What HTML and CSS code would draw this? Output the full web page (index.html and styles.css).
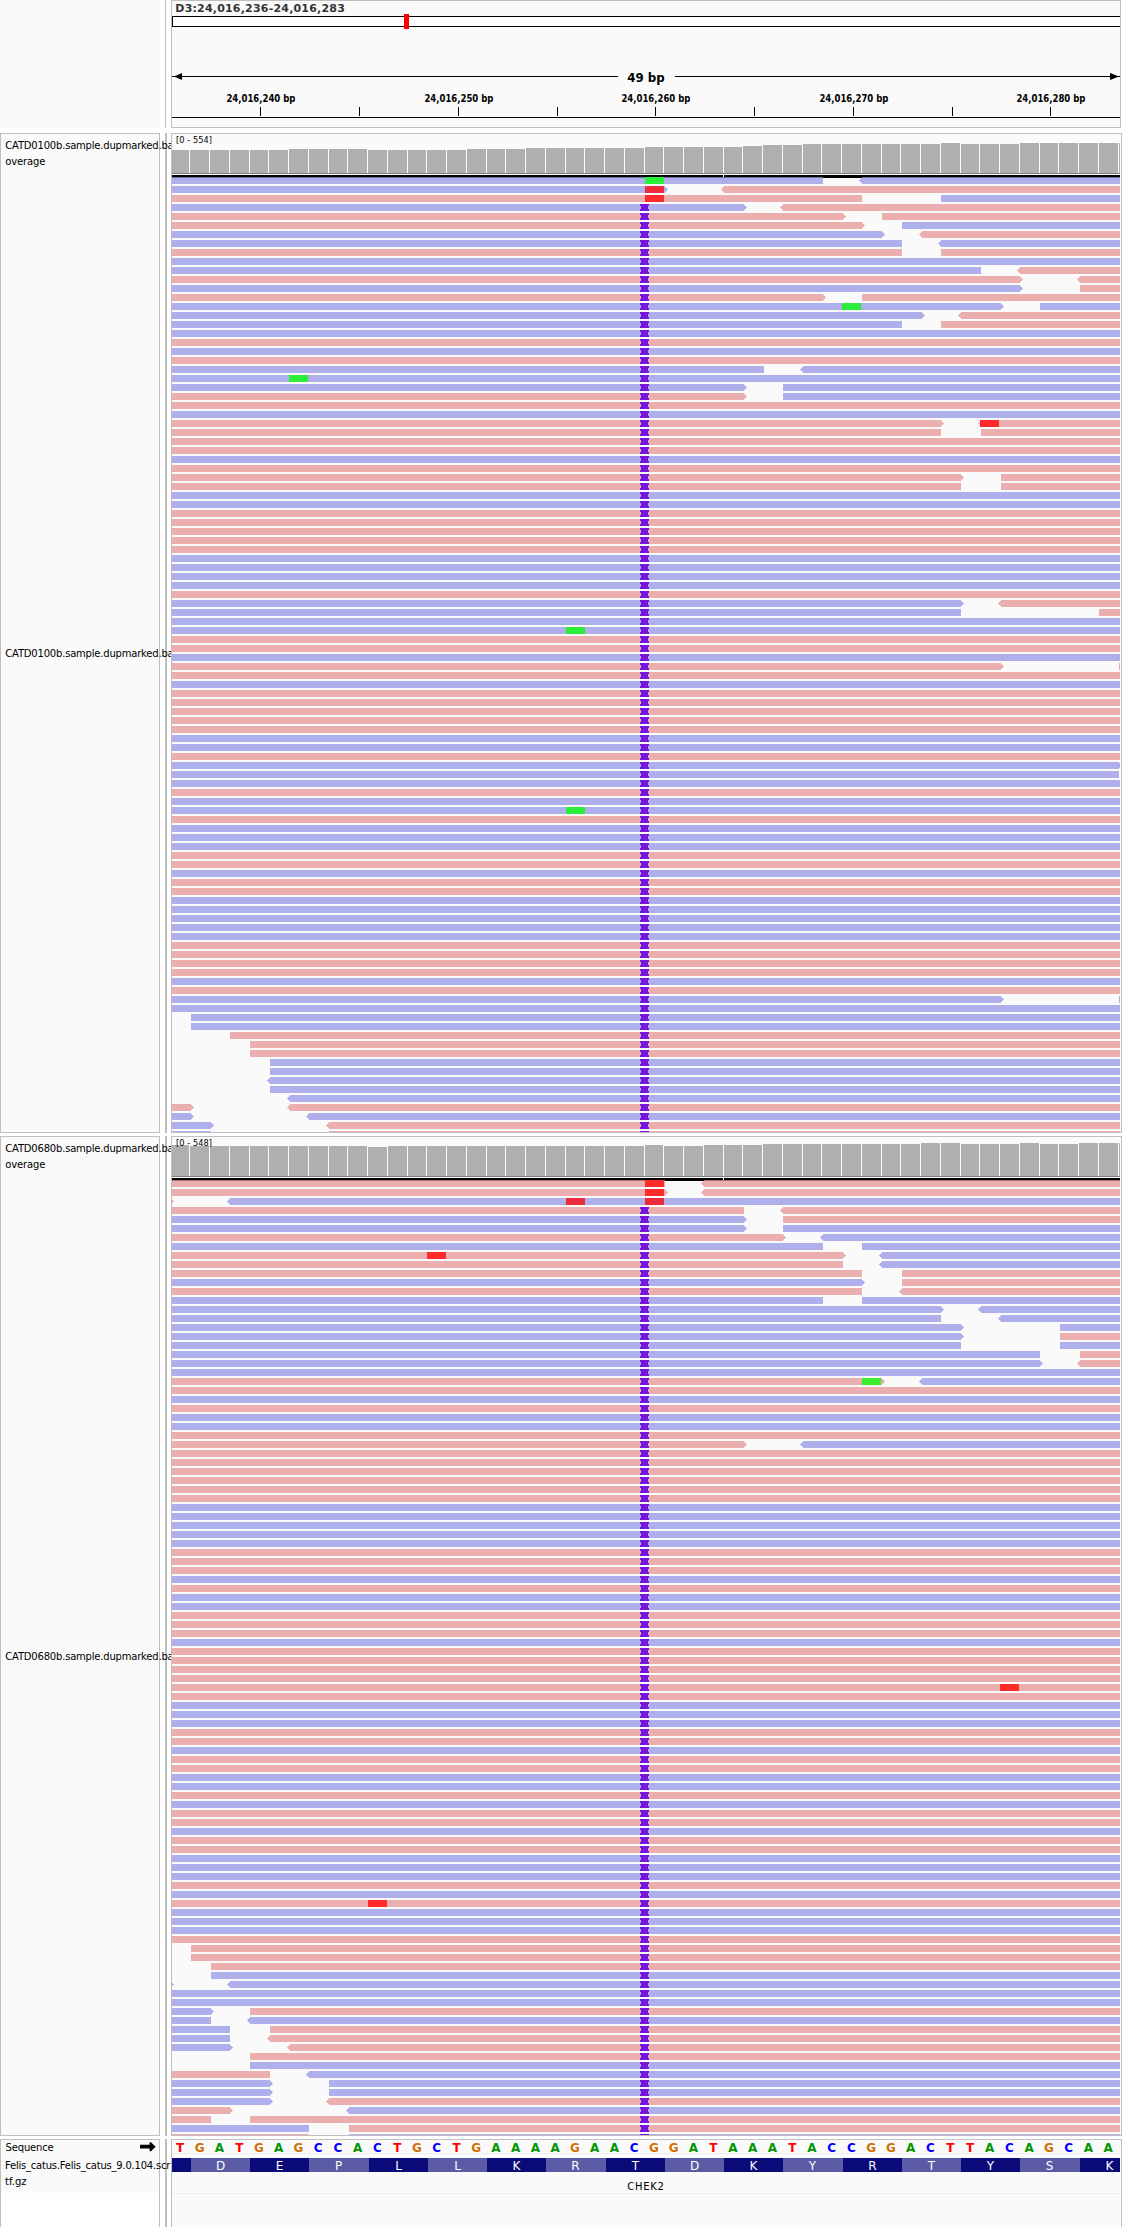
FILE: index.html
```html
<!DOCTYPE html>
<html lang="en">
<head>
<meta charset="utf-8">
<title>D3:24,016,236-24,016,283</title>
<link rel="stylesheet" href="styles.css">
</head>
<body>
<main class="viewer">
  <section class="band band-header">
    <div class="names names-empty"></div>
    <div class="splitter splitter-thin"></div>
    <div class="data data-header">
      <svg class="plot" width="948" height="126" viewBox="172 1 948 126" id="ruler">
        <text class="locus" x="175.3" y="12" textLength="169.5">D3:24,016,236-24,016,283</text>
        <rect class="ideogram" x="172.5" y="16.5" width="960" height="10"/>
        <rect class="window" x="404" y="14" width="5" height="15"/>
        <path class="line" d="M172 76.5H618M675 76.5H1120M172 117.5H1120"/>
        <path class="head" d="M174 76.5L182 73V80ZM1119 76.5L1110 73V80Z"/>
        <text class="span" x="627.3" y="82" textLength="37.5" lengthAdjust="spacingAndGlyphs">49 bp</text>
      </svg>
    </div>
  </section>

  <section class="band band-track">
    <div class="names">
      <p class="name name-coverage">CATD0100b.sample.dupmarked.ba<br><span class="tail">overage</span></p>
      <p class="name name-reads">CATD0100b.sample.dupmarked.ba</p>
    </div>
    <div class="splitter"></div>
    <div class="data">
      <svg class="plot" width="948" height="998" viewBox="172 134 948 998" id="track-0100b"></svg>
    </div>
  </section>

  <section class="band band-track">
    <div class="names">
      <p class="name name-coverage">CATD0680b.sample.dupmarked.ba<br><span class="tail">overage</span></p>
      <p class="name name-reads">CATD0680b.sample.dupmarked.ba</p>
    </div>
    <div class="splitter"></div>
    <div class="data">
      <svg class="plot" width="948" height="998" viewBox="172 134 948 998" id="track-0680b"></svg>
    </div>
  </section>

  <section class="band band-features">
    <div class="names names-features">
      <div class="feature-names">
        <div class="sequence-row">
          <span class="name sequence-name">Sequence</span>
          <svg class="strand" width="16" height="10" viewBox="0 0 16 10"><path d="M0 2.8H9.6V.2H11L15.6 4.7L11 9.2H9.6V6.6H0Z"/></svg>
        </div>
        <p class="name gtf-name">Felis_catus.Felis_catus_9.0.104.scr<br><span class="gtf-tail">tf.gz</span></p>
      </div>
    </div>
    <div class="splitter"></div>
    <div class="data">
      <svg class="plot" width="948" height="87" viewBox="172 2140 948 87" id="features">
        <path class="divider" d="M172 2153.5H1120M172 2193.5H1120"/>
        <text class="gene" x="627.2" y="2190" textLength="36.6">CHEK2</text>
      </svg>
    </div>
  </section>
</main>
<script src="tracks.js"></script>
</body>
</html>
```

FILE: styles.css
```css
body {
  margin: 0;
  background: #fff;
  font-family: "DejaVu Sans", sans-serif;
  color: #000;
}

.viewer {
  display: flex;
  flex-direction: column;
  width: 1140px;
  height: 2227px;
  overflow: hidden;
}

.band {
  display: flex;
  flex: none;
}

.band-header { height: 128px; margin-bottom: 5px; }
.band-track { height: 1000px; margin-bottom: 3px; }
.band-features { height: 88px; }

.names {
  box-sizing: border-box;
  width: 160px;
  flex: none;
  background: #fafafa;
  border: 1px solid #bfbfbf;
  z-index: 1;
}

.names-empty { border: 0; }
.names-features { background: #fff; border-bottom: 0; }
.feature-names { height: 53px; background: #fafafa; }

.splitter {
  width: 2px;
  flex: none;
  margin: 0 4px 0 5px;
  background: #bfbfbf;
}

.splitter-thin { width: 1px; margin-right: 5px; }

.data {
  box-sizing: border-box;
  width: 951px;
  flex: none;
  background: #fafafa;
  border: 1px solid #bfbfbf;
  z-index: 2;
}

.data-header { width: 950px; }
.band-features .data { border-bottom: 0; }

.plot { display: block; }

.name {
  margin: 0;
  font-size: 10px;
  line-height: 16px;
  letter-spacing: -0.2px;
  white-space: nowrap;
}

.tail { letter-spacing: -0.15px; }
.name-coverage { padding: 4px 0 0 4.3px; }
.name-reads { padding: 476px 0 0 4.3px; }

.sequence-row {
  display: flex;
  justify-content: space-between;
  height: 18px;
  padding: 0 3px 0 4.5px;
}

.sequence-name { letter-spacing: -0.15px; }
.strand { margin-top: 2px; }
.gtf-name { padding-left: 4px; letter-spacing: -0.22px; }
.gtf-tail { letter-spacing: 0; }

.locus { font-size: 11px; font-weight: bold; fill: #333; }
.ideogram { fill: #fff; stroke: #000; }
.window { fill: #f00; }
.line { stroke: #000; fill: none; }
.head { fill: #000; }
.span { font-size: 12px; font-weight: bold; }
.tick-label { font-size: 10px; font-weight: bold; }

.range { font-size: 8.2px; }
.coverage { fill: #afafaf; }
.baseline { fill: #808080; }
.rule { fill: #000; }
.notch { fill: #fff; }
.read-b { fill: #afafeb; }
.read-r { fill: #ebafaf; }
.edge-b { fill: #70709b; }
.edge-r { fill: #9b7070; }
.insertion { fill: #7615dc; }
.snp-T-r { fill: #ff2b2b; }
.snp-T-b { fill: #ed2b3b; }
.snp-A-r { fill: #3bee2b; }
.snp-A-b { fill: #2bee3b; }

.divider { stroke: #eee; }
.gene { font-size: 10px; }
.exon-dark { fill: #0a0a78; }
.exon-light { fill: #5b5ba5; }
.residue { font-size: 12px; fill: #fff; text-anchor: middle; }
.base { font-size: 12px; font-weight: bold; text-anchor: middle; }
.base-A { fill: #009600; }
.base-C { fill: #0000ff; }
.base-G { fill: #d17105; }
.base-T { fill: #ff0000; }
```

FILE: tracks.js
```js
const NS = "http://www.w3.org/2000/svg";
const RIGHT = 1120;
const LEFT = 172;
const readX = k => Math.floor(171.5 + 19.75 * k);
const binX = k => Math.floor(170 + 19.75 * k) + 1;

function add(svg, tag, cls, attrs, text) {
  const el = document.createElementNS(NS, tag);
  el.setAttribute("class", cls);
  for (const name in attrs) el.setAttribute(name, attrs[name]);
  if (text) el.textContent = text;
  svg.appendChild(el);
}

function box(svg, cls, x, y, width, height) {
  add(svg, "rect", cls, { x, y, width, height, "shape-rendering": "crispEdges" });
}

// Ruler ticks, every 5 bp, labelled every 10 bp
const ruler = document.getElementById("ruler");
[260, 359, 458, 557, 655, 754, 853, 952, 1050].forEach((x, i) => {
  box(ruler, "rule", x, 107, 1, 9);
  if (i % 2 === 0) {
    add(ruler, "text", "tick-label",
      { x: x - 33.6, y: 102, textLength: 69, lengthAdjust: "spacingAndGlyphs" },
      "24,016," + (240 + i * 5) + " bp");
  }
});

// Each row lists its reads: strand colour, first and last base, "<" or ">" for
// an arrow end. Mismatches (base letter and position) follow their read.
// A single-letter read crosses the whole window.
const rows0100 = `b-33 A24 b<35-|b-25> T24 r<28-|r-35 T24 b39-|b-29> r<31-|r-34> r36-|r-35> b37-|b-36> r<38-|b-37 b<39-|r-37 r39-|b
b-41 r<43-|r-43> r<46-|b-43> r46-|r-33> r35-|b-42> A34 b44-|b-38> r<40-|b-37 r39-|b|r|b
r|b-30 b<32-|b A6|b-29> b31-|r-29> b31-|r|b|r-39> r<41- T41|r-39 r41-|r
r|b|r|r-40> r42-|r-40 r42-|b|b|r|r|r
r|r|b|b|b|b|r|b-40> r<42-|b-40 r47-|b
b A20|r|r|b|r-42> r48-|r|b|r|r|r
r|r|b|b|r|b-48>|b-48|b|r|b
b A20|r|b|b|b|r|r|b|r|r
b|b|b|b|b|r|r|r|r|b
r|b-42> b48-|b|b1-|b1-|r3-|r4-|r4-|b5-|b5-
b<5-|b5-|b<6-|r-1> r<6-|b-1> b<7-|b-2> r<8-|b-2 r8-`;

const rows0680 = `r-25 T24 r<27-|r-25> T24 r<27-|r-0> b<3- T20 T24|r-29 r<31-|b-29> r31-|b-29> b31-|r-31> b<33-|b-33 b35-|r-34> T13 b<36-|r-34 b<36-
r-35 r37-|b-35> r37-|r-35 r<37-|b-33 b35-|b-39> b<41-|b-39 b<42-|b-40> b45-|b-40> r45-|b-40 b45-|b-44 r46-
b-44> r<46-|b|r-36> A35 b<38-|r|b|r|b|b|r|r-29> b<32-
r|r|r|r|r|r|b|b|b|b
b|r|r|r|b|r|b|b|r|r
r|b|r|r|r|r|r T42|r|b|b
b|r|r|b|r|r|b|b|r|b
r|r|b|r|r|b|b|b|r|b
r T10|b|b|b|r|r1-|r1-|r2-|b2-|b-0> b<3-
b|b|b-2> r4-|b-2 b<4-|b-3 r5-|b-3 r<5-|b-3> r<6-|r4-|b4-|r-5 b<7-
b-5> b8-|b-5> b8-|b-5> r<8-|r-3> b<9-|r-2 r4-|b-7 r9-|r-7 b9-`;

function arrow(svg, colour, x, y, dir) {
  [[1, 5], [2, 3], [3, 1]].forEach(([reach, height]) => {
    box(svg, "read-" + colour, dir > 0 ? x + reach - 1 : x - reach, y + (7 - height) / 2, 1, height);
  });
}

function drawTrack(id, range, tops, data) {
  const svg = document.getElementById(id);

  tops.forEach((top, k) => {
    const x = Math.max(LEFT, binX(k));
    const end = Math.min(RIGHT, binX(k + 1) - 1);
    box(svg, "coverage", x, top, end - x, 173 - top);
  });
  box(svg, "baseline", LEFT, 173, RIGHT - LEFT, 1);
  add(svg, "text", "range", { x: 176, y: 143, textLength: 36 }, range);
  box(svg, "rule", LEFT, 175, RIGHT - LEFT, 3);
  box(svg, "notch", 723, 175, 1, 2);

  data.split(/[|\n]/).forEach((row, i) => {
    const y = 177 + 9 * i;
    let strand = "b";
    row.split(" ").forEach(item => {
      const snp = item.match(/^([AT])(\d+)$/);
      if (snp) {
        box(svg, "snp-" + snp[1] + "-" + strand, binX(+snp[2]), y, 19, 7);
        return;
      }
      const [, colour, from, to] = item.match(/^([br])(<?\d*)-?(\d*>?)$/);
      strand = colour;
      const x1 = from ? readX(+from.replace("<", "")) : LEFT;
      const x2 = to ? readX(+to.replace(">", "")) : RIGHT;
      if (x2 > x1) box(svg, "read-" + colour, x1, y, x2 - x1, 7);
      if (i === 0) box(svg, "edge-" + colour, x1, y, x2 - x1, 1);
      if (from.startsWith("<")) arrow(svg, colour, x1, y, -1);
      if (to.endsWith(">")) arrow(svg, colour, x2, y, 1);
    });
    if (i > 2) {
      box(svg, "insertion", 640, y, 9, 2);
      box(svg, "insertion", 641, y + 2, 7, 3);
      box(svg, "insertion", 640, y + 5, 9, 2);
    }
  });
}

const fill = (...runs) => runs.flatMap(([n, top]) => Array(n).fill(top));

drawTrack("track-0100b", "[0 - 554]",
  fill([6, 150], [4, 149], [5, 150], [3, 149], [6, 148], [5, 147], [1, 146], [2, 145], [7, 144], [1, 143], [3, 144], [6, 143]),
  rows0100);
drawTrack("track-0680b", "[0 - 548]",
  fill([1, 142], [9, 143], [1, 144], [13, 143], [1, 142], [2, 143], [3, 142], [8, 141], [2, 140], [3, 141], [1, 140], [2, 141], [3, 140]),
  rows0680);

// Reference sequence and translated exon
const features = document.getElementById("features");
[..."TGATGAGCCACTGCTGAAAAGAACGGATAAATACCGGACTTACAGCAA"].forEach((base, k) => {
  add(features, "text", "base base-" + base, { x: 180 + 19.75 * k, y: 2152 }, base);
});
[..." DEPLLKRTDKYRTYSK"].forEach((residue, i) => {
  const x = i ? readX(3 * i - 2) : LEFT;
  const end = Math.min(RIGHT, readX(3 * i + 1));
  box(features, i % 2 ? "exon-light" : "exon-dark", x, 2158, end - x, 14);
  add(features, "text", "residue", { x: readX(3 * i - 2) + 29.5, y: 2169.5 }, residue.trim());
});
```
